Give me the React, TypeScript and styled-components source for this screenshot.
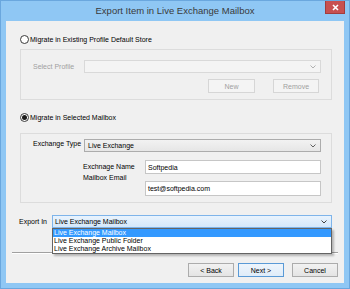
import React from 'react';
import styled, { createGlobalStyle } from 'styled-components';

const GlobalStyle = createGlobalStyle`
  html, body {
    margin: 0;
    padding: 0;
    background: #ffffff;
  }
  * {
    box-sizing: border-box;
  }
`;

const Window = styled.div`
  width: 350px;
  height: 289px;
  background: #8fc7f4;
  border: 1px solid #6aa7de;
  display: flex;
  flex-direction: column;
  font-family: "Liberation Sans", Arial, sans-serif;
  font-size: 7px;
  color: #000000;
`;

const TitleBar = styled.div`
  height: 20px;
  display: grid;
  grid-template-columns: 1fr auto 1fr;
  align-items: start;
`;

const Title = styled.div`
  grid-column: 2;
  font-size: 9.5px;
  color: #3a3a3a;
  line-height: 20px;
`;

const CloseButton = styled.div`
  grid-column: 3;
  justify-self: end;
  margin-right: 4px;
  width: 20px;
  height: 13px;
  background: #c75050;
  border: 1px solid #a33c3c;
  border-top: none;
  display: flex;
  align-items: center;
  justify-content: center;
`;

const Client = styled.div`
  flex: 1;
  margin: 0 5px 5px 5px;
  background: #f0f0f0;
  display: flex;
  flex-direction: column;
`;

const RadioRow = styled.div<{ $top: number }>`
  display: flex;
  align-items: center;
  height: 10px;
  margin-top: ${p => p.$top}px;
  padding-left: 14px;
  gap: 1px;
`;

const RadioCircle = styled.div<{ $checked: boolean }>`
  width: 9px;
  height: 9px;
  border-radius: 50%;
  border: 1px solid #3a3a3a;
  background: #ffffff;
  display: flex;
  align-items: center;
  justify-content: center;

  &::after {
    content: '';
    width: 5px;
    height: 5px;
    border-radius: 50%;
    background: ${p => (p.$checked ? '#1a1a1a' : 'transparent')};
  }
`;

const Group = styled.div<{ $top: number; $height: number }>`
  margin: ${p => p.$top}px 12px 0 14px;
  height: ${p => p.$height}px;
  border: 1px solid #dcdcdc;
  display: flex;
  flex-direction: column;
`;

const Row = styled.div<{ $top: number; $indent: number }>`
  display: flex;
  margin-top: ${p => p.$top}px;
  padding-left: ${p => p.$indent}px;
  padding-right: 10px;
`;

const Label = styled.div<{ $width: number; $offset: number; $disabled?: boolean }>`
  width: ${p => p.$width}px;
  flex-shrink: 0;
  margin-top: ${p => p.$offset}px;
  color: ${p => (p.$disabled ? '#a0a0a0' : '#000000')};
  line-height: 8px;
  white-space: nowrap;
`;

const SelectBox = styled.div<{ $disabled?: boolean; $height: number }>`
  flex: 1;
  height: ${p => p.$height}px;
  border: 1px solid ${p => (p.$disabled ? '#d9d9d9' : '#acacac')};
  background: ${p =>
    p.$disabled ? '#f4f4f4' : 'linear-gradient(#f2f2f2, #e6e6e6)'};
  display: flex;
  align-items: center;
  justify-content: space-between;
  padding: 0 4px 0 3px;
`;

const TextInput = styled.div<{ $height: number }>`
  flex: 1;
  height: ${p => p.$height}px;
  border: 1px solid #c6c6c6;
  background: #ffffff;
  display: flex;
  align-items: center;
  padding: 0 2px;
`;

const ButtonRow = styled.div<{ $top: number; $right: number; $gap: number }>`
  display: flex;
  justify-content: flex-end;
  gap: ${p => p.$gap}px;
  margin-top: ${p => p.$top}px;
  padding-right: ${p => p.$right}px;
`;

const Button = styled.div<{
  $variant?: 'disabled' | 'focused' | 'normal';
  $width?: number;
  $left?: number;
}>`
  width: ${p => p.$width ?? 46}px;
  height: 14px;
  margin-left: ${p => p.$left ?? 0}px;
  display: flex;
  align-items: center;
  justify-content: center;
  border: 1px solid
    ${p =>
      p.$variant === 'disabled' ? '#d6d6d6' : p.$variant === 'focused' ? '#5a9ad6' : '#acacac'};
  background: ${p =>
    p.$variant === 'disabled'
      ? '#f4f4f4'
      : p.$variant === 'focused'
      ? 'linear-gradient(#eef5fc, #dfecf9)'
      : 'linear-gradient(#f2f2f2, #e4e4e4)'};
  color: ${p => (p.$variant === 'disabled' ? '#a0a0a0' : '#000000')};
`;

const ExportRow = styled.div`
  display: flex;
  align-items: center;
  margin-top: 12px;
  padding-left: 13px;
  padding-right: 12px;
`;

const ExportLabel = styled.div`
  width: 33px;
  flex-shrink: 0;
`;

const ComboWrap = styled.div`
  flex: 1;
  position: relative;
`;

const Combo = styled.div`
  height: 13px;
  border: 1px solid #7eb4ea;
  background: linear-gradient(#e9f3fd, #d4e8fb);
  display: flex;
  align-items: center;
  justify-content: space-between;
  padding: 0 4px 0 2px;
`;

const DropList = styled.div`
  position: absolute;
  top: 13px;
  left: 0;
  right: 0;
  background: #ffffff;
  border: 1px solid #646464;
  box-shadow: 2px 2px 2px rgba(0, 0, 0, 0.25);
  z-index: 2;
`;

const DropItem = styled.div<{ $selected?: boolean }>`
  height: 8px;
  line-height: 8px;
  padding-left: 1px;
  background: ${p => (p.$selected ? '#3399ff' : 'transparent')};
  color: ${p => (p.$selected ? '#ffffff' : '#000000')};
`;

const Separator = styled.div`
  margin: 24px 6px 0 6px;
  height: 2px;
  border-top: 1px solid #a0a0a0;
  border-bottom: 1px solid #ffffff;
`;

function Chevron({ color = '#606060' }: { color?: string }): React.JSX.Element {
  return (
    <svg width="6" height="4" viewBox="0 0 6 4">
      <polyline points="0.5,0.5 3,3 5.5,0.5" fill="none" stroke={color} strokeWidth="1" />
    </svg>
  );
}

function App(): React.JSX.Element {
  return (
    <>
      <GlobalStyle />
      <Window>
        <TitleBar>
          <Title>Export Item in Live Exchange Mailbox</Title>
          <CloseButton>
            <svg width="7" height="7" viewBox="0 0 7 7">
              <path d="M1 1 L6 6 M6 1 L1 6" stroke="#ffffff" strokeWidth="1.6" />
            </svg>
          </CloseButton>
        </TitleBar>
        <Client>
          <RadioRow $top={13}>
            <RadioCircle $checked={false} />
            <span>Migrate in Existing Profile Default Store</span>
          </RadioRow>
          <Group $top={5} $height={51}>
            <Row $top={10} $indent={12}>
              <Label $width={51} $offset={3} $disabled>Select Profile</Label>
              <SelectBox $disabled $height={13}>
                <span />
                <Chevron color="#b0b0b0" />
              </SelectBox>
            </Row>
            <ButtonRow $top={6} $right={12} $gap={18}>
              <Button $variant="disabled" $width={47}>New</Button>
              <Button $variant="disabled">Remove</Button>
            </ButtonRow>
          </Group>
          <RadioRow $top={12}>
            <RadioCircle $checked />
            <span>Migrate in Selected Mailbox</span>
          </RadioRow>
          <Group $top={11} $height={70}>
            <Row $top={5} $indent={12}>
              <Label $width={51} $offset={1}>Exchange Type</Label>
              <SelectBox $height={13}>
                <span>Live Exchange</span>
                <Chevron />
              </SelectBox>
            </Row>
            <Row $top={8} $indent={62}>
              <Label $width={62} $offset={3}>Exchnage Name</Label>
              <TextInput $height={14}>Softpedia</TextInput>
            </Row>
            <Row $top={7} $indent={62}>
              <Label $width={62} $offset={-7}>Mailbox Email</Label>
              <TextInput $height={15}>test@softpedia.com</TextInput>
            </Row>
          </Group>
          <ExportRow>
            <ExportLabel>Export In</ExportLabel>
            <ComboWrap>
              <Combo>
                <span>Live Exchange Mailbox</span>
                <Chevron color="#404040" />
              </Combo>
              <DropList>
                <DropItem $selected>Live Exchange Mailbox</DropItem>
                <DropItem>Live Exchange Public Folder</DropItem>
                <DropItem>Live Exchange Archive Mailbox</DropItem>
              </DropList>
            </ComboWrap>
          </ExportRow>
          <Separator />
          <ButtonRow $top={9} $right={6} $gap={0}>
            <Button>&lt; Back</Button>
            <Button $variant="focused" $left={4}>Next &gt;</Button>
            <Button $left={8}>Cancel</Button>
          </ButtonRow>
        </Client>
      </Window>
    </>
  );
}

export default App;
